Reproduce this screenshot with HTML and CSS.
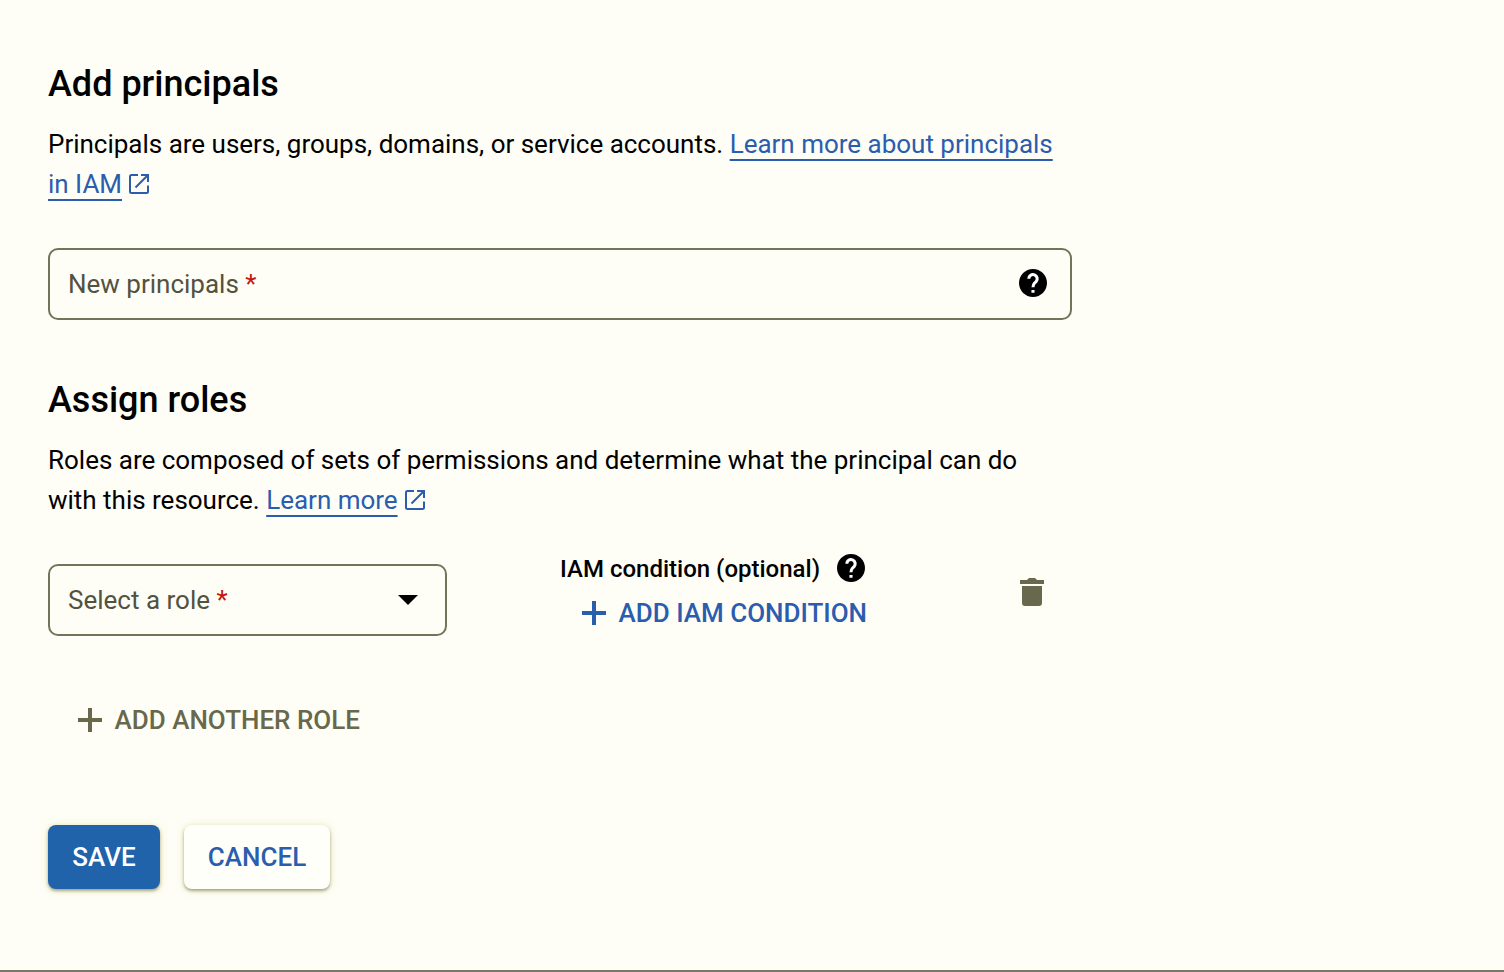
FILE: index.html
```html
<!DOCTYPE html>
<html lang="en">
<head>
<meta charset="utf-8">
<title>Add principals</title>
<link rel="stylesheet" href="styles.css">
</head>
<body>
<main class="panel">
  <h2 class="title">Add principals</h2>
  <p class="desc">Principals are users, groups, domains, or service accounts. <a class="link" href="#">Learn more about principals<br>in IAM</a><svg class="ext" viewBox="0 0 20 20"><path d="M9 1H2.5Q1 1 1 2.5v15Q1 19 2.500 19h15q1.500 0 1.500-1.500V11.500M12 1h7v7M18.500 1.500L6.500 13.500"/></svg></p>
  <div class="field field-wide">
    <span class="label">New principals <b class="req">*</b></span>
    <svg class="help" viewBox="2 2 20 20"><path d="M12 2C6.48 2 2 6.48 2 12s4.48 10 10 10 10-4.48 10-10S17.52 2 12 2z"/><path class="mark" d="M9 9a3 3 0 1 1 5.200 2L13 12.200Q12 13.200 12 15M12 17v2"/></svg>
  </div>
  <h2 class="title title-roles">Assign roles</h2>
  <p class="desc">Roles are composed of sets of permissions and determine what the principal can do<br>with this resource. <a class="link" href="#">Learn more</a><svg class="ext" viewBox="0 0 20 20"><path d="M9 1H2.500Q1 1 1 2.500v15Q1 19 2.500 19h15q1.500 0 1.500-1.500V11.500M12 1h7v7M18.500 1.500L6.500 13.500"/></svg></p>
  <div class="role-row">
    <div class="field field-role">
      <span class="label">Select a role <b class="req">*</b></span>
      <svg class="caret" viewBox="0 0 20 10"><path d="M0 0h20L10 10z"/></svg>
    </div>
    <div class="condition">
      <div class="condition-head"><span>IAM condition (optional)</span>
        <svg class="help" viewBox="2 2 20 20"><path d="M12 2C6.48 2 2 6.48 2 12s4.48 10 10 10 10-4.48 10-10S17.52 2 12 2z"/><path class="mark" d="M9 9a3 3 0 1 1 5.200 2L13 12.200Q12 13.200 12 15M12 17v2"/></svg>
      </div>
      <button class="text-btn"><svg class="plus" viewBox="0 0 24 24"><path d="M10 0h4v10h10v4H14v10h-4V14H0v-4h10z"/></svg><span>ADD IAM CONDITION</span></button>
    </div>
    <svg class="trash" viewBox="0 0 24 28"><path d="M0 2h7l2-2h6l2 2h7v4H0zM2 8h20v17q0 3-3 3H5q-3 0-3-3z"/></svg>
  </div>
  <button class="text-btn muted"><svg class="plus" viewBox="0 0 24 24"><path d="M10 0h4v10h10v4H14v10h-4V14H0v-4h10z"/></svg><span>ADD ANOTHER ROLE</span></button>
  <div class="actions">
    <button class="btn primary">SAVE</button>
    <button class="btn">CANCEL</button>
  </div>
</main>
</body>
</html>
```
FILE: styles.css
```css
* { box-sizing: border-box; }
body {
  margin: 0;
  height: 972px;
  overflow: hidden;
  background: #fefef7;
  border-bottom: 2px solid #77776a;
  font-family: Roboto, "Liberation Sans", sans-serif;
  font-size: 26px;
  color: #000;
}
.panel { padding: 60px 0 0 48px; width: 1072px; }
.title { margin: 0; font-size: 36px; line-height: 48px; font-weight: 500; }
.desc { margin: 16px 0 0; line-height: 40px; white-space: nowrap; letter-spacing: -0.01px; }
.link { color: #2b5dae; text-decoration: underline; text-decoration-thickness: 2px; text-underline-offset: 6px; text-decoration-skip-ink: none; }
.ext { width: 20px; height: 20px; margin-left: 7px; vertical-align: -1px; fill: none; stroke: #2b5dae; stroke-width: 2; }
.field {
  display: flex;
  align-items: center;
  justify-content: space-between;
  height: 72px;
  padding-left: 18px;
  border: 2px solid #73755a;
  border-radius: 10px;
  color: #52523f;
}
.field-wide { margin-top: 44px; padding-right: 23px; }
.field-role { width: 399px; padding-right: 27px; }
.req { color: #c5170c; font-weight: 400; }
.help { width: 28px; height: 28px; fill: #000; }
.help .mark { fill: none; stroke: #fff; stroke-width: 2.2; }
.field-wide .help { margin-top: -2px; }
.caret { width: 20px; height: 10px; }
.title-roles { margin-top: 56px; }
.role-row { display: flex; margin-top: 44px; height: 72px; }
.condition { margin: -12px 0 0 113px; width: 460px; }
.condition-head { display: flex; align-items: center; gap: 17px; height: 32px; font-size: 24px; font-weight: 500; }
.condition-head span { padding-top: 2px; }
.text-btn {
  display: flex;
  align-items: center;
  gap: 12.5px;
  height: 32px;
  margin: 13px 0 0 22px;
  padding: 0;
  border: 0;
  background: none;
  font: 500 26px Roboto, sans-serif;
  color: #2b5dae;
}
.plus { width: 24px; height: 24px; fill: currentColor; }
.muted { margin: 68px 0 0 30px; color: #68684c; }
.trash { width: 24px; height: 28px; margin-top: 14px; fill: #68684c; }
.actions { display: flex; gap: 24px; margin-top: 89px; }
.btn {
  height: 64px;
  width: 146px;
  padding: 0;
  border: 0;
  border-radius: 8px;
  background: #fffffa;
  box-shadow: 0 2px 3px rgba(60, 60, 30, .4), 0 1px 8px rgba(190, 180, 60, .35);
  font: 500 26px Roboto, sans-serif;
  color: #2b5dae;
}
.primary { width: 112px; background: #2163aa; color: #fff; }
```
